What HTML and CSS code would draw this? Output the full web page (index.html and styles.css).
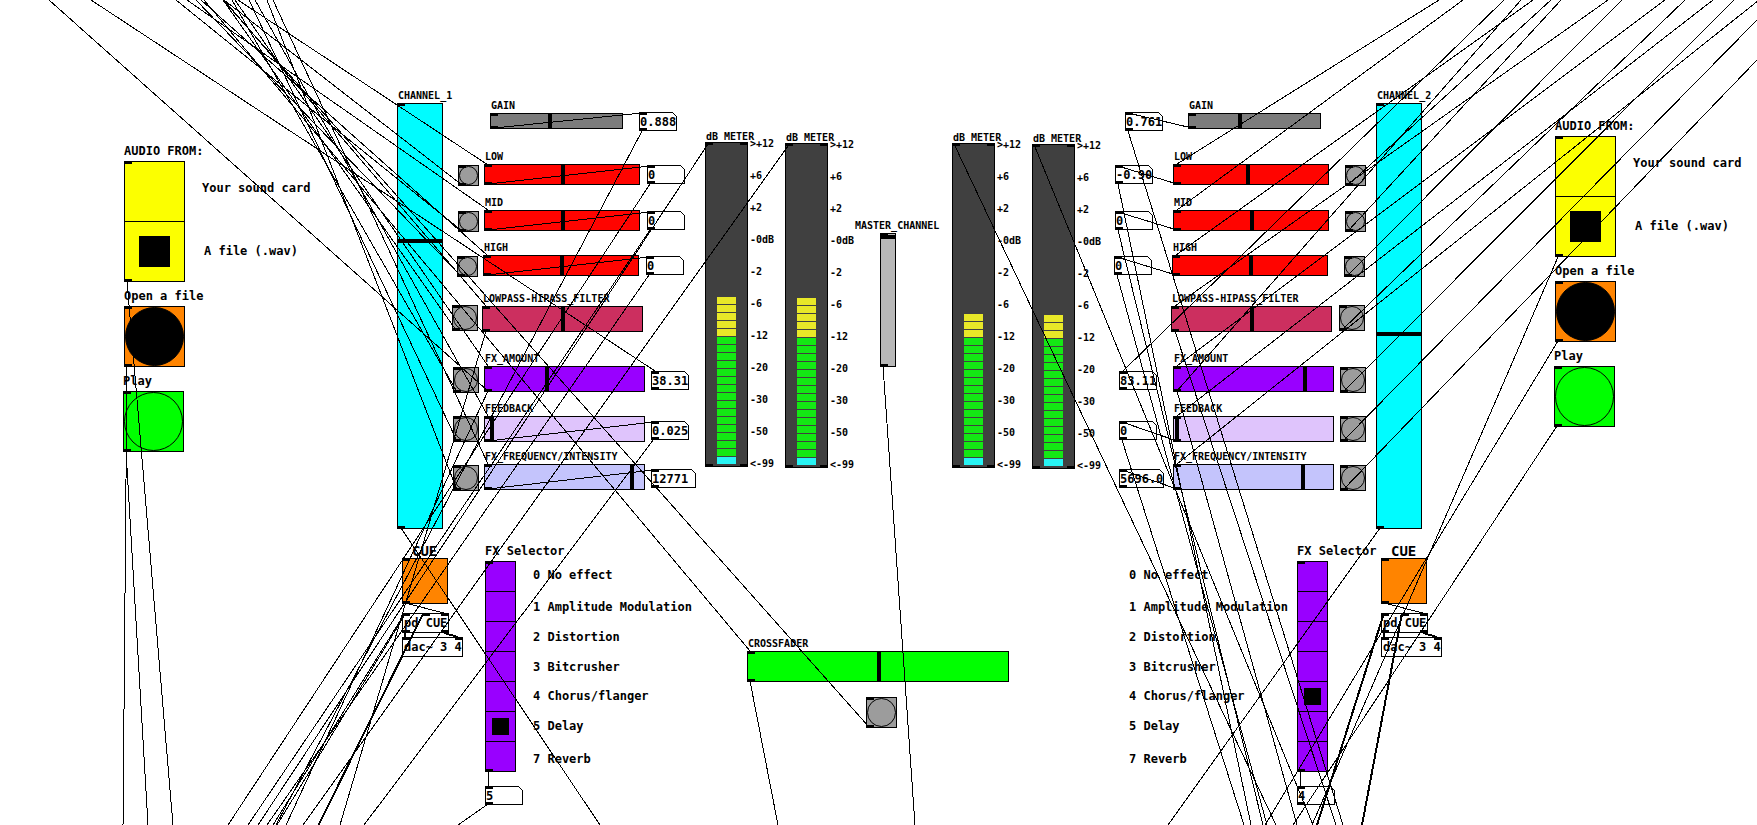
FILE: index.html
```html
<!DOCTYPE html>
<html lang="en">
<head>
<meta charset="utf-8">
<title>DJ mixer patch</title>
<link rel="stylesheet" href="styles.css">
</head>
<body>
<main class="patch">

  <!-- Source, deck 1 -->
  <span class="note" style="--x:124px;--y:143px">AUDIO FROM:</span>
  <div class="node radio audio" role="radiogroup" aria-label="Audio from, deck 1" style="--x:124px;--y:161px">
    <input type="radio" name="src1" id="src1a"><input type="radio" name="src1" id="src1b" checked>
  </div>
  <label class="note" for="src1a" style="--x:202px;--y:180px">Your sound card</label>
  <label class="note" for="src1b" style="--x:204px;--y:243px">A file (.wav)</label>
  <label class="note" for="open1" style="--x:124px;--y:288px">Open a file</label>
  <div class="node bang big orange lit" style="--x:124px;--y:306px"><button id="open1"></button></div>
  <label class="note" for="play1" style="--x:123px;--y:373px">Play</label>
  <div class="node bang big green" style="--x:123px;--y:391px"><button id="play1"></button></div>

  <!-- Channel 1 -->
  <div class="node fader channel" style="--x:397px;--y:103px"><label for="ch1">CHANNEL_1</label><input type="range" id="ch1" max="420" value="285"></div>
  <div class="node slider gain" style="--x:490px;--y:113px"><label for="gain1">GAIN</label><input type="range" id="gain1" max="127" value="57"></div>
  <div class="node slider eq" style="--x:484px;--y:164px"><label for="low1">LOW</label><input type="range" id="low1" max="150" value="76"></div>
  <div class="node slider eq" style="--x:484px;--y:210px"><label for="mid1">MID</label><input type="range" id="mid1" max="150" value="76"></div>
  <div class="node slider eq" style="--x:483px;--y:255px"><label for="high1">HIGH</label><input type="range" id="high1" max="150" value="76"></div>
  <div class="node slider fx filter" style="--x:482px;--y:306px"><label for="lp1">LOWPASS-HIPASS_FILTER</label><input type="range" id="lp1" max="155" value="78"></div>
  <div class="node slider fx amount" style="--x:484px;--y:366px"><label for="amt1">FX_AMOUNT</label><input type="range" id="amt1" max="155" value="60"></div>
  <div class="node slider fx feedback" style="--x:484px;--y:416px"><label for="fb1">FEEDBACK</label><input type="range" id="fb1" max="155" value="5"></div>
  <div class="node slider fx freq" style="--x:484px;--y:464px"><label for="frq1">FX_FREQUENCY/INTENSITY</label><input type="range" id="frq1" max="155" value="145"></div>

  <div class="node bang small" style="--x:458px;--y:165px"><button aria-label="Reset low 1"></button></div>
  <div class="node bang small" style="--x:458px;--y:211px"><button aria-label="Reset mid 1"></button></div>
  <div class="node bang small" style="--x:457px;--y:256px"><button aria-label="Reset high 1"></button></div>
  <div class="node bang medium" style="--x:452px;--y:305px"><button aria-label="Reset filter 1"></button></div>
  <div class="node bang medium" style="--x:453px;--y:367px"><button aria-label="Reset amount 1"></button></div>
  <div class="node bang medium" style="--x:453px;--y:416px"><button aria-label="Reset feedback 1"></button></div>
  <div class="node bang medium" style="--x:453px;--y:465px"><button aria-label="Reset frequency 1"></button></div>

  <div class="node number" style="--x:639px;--y:112px"><input aria-label="Gain 1" value="0.888"></div>
  <div class="node number" style="--x:647px;--y:165px"><input aria-label="Low 1" value="0"></div>
  <div class="node number" style="--x:647px;--y:211px"><input aria-label="Mid 1" value="0"></div>
  <div class="node number" style="--x:646px;--y:256px"><input aria-label="High 1" value="0"></div>
  <div class="node number" style="--x:651px;--y:371px"><input aria-label="Amount 1" value="38.31"></div>
  <div class="node number" style="--x:651px;--y:421px"><input aria-label="Feedback 1" value="0.025"></div>
  <div class="node number wide" style="--x:651px;--y:469px"><input aria-label="Frequency 1" value="12771"></div>

  <!-- Meters -->
  <div class="node meter" style="--x:705px;--y:142px"><span class="tag">dB_METER</span><div class="bars loud"></div>
    <ul><li>&gt;+12</li><li>+6</li><li>+2</li><li>-0dB</li><li>-2</li><li>-6</li><li>-12</li><li>-20</li><li>-30</li><li>-50</li><li>&lt;-99</li></ul></div>
  <div class="node meter" style="--x:785px;--y:143px"><span class="tag">dB_METER</span><div class="bars loud"></div>
    <ul><li>&gt;+12</li><li>+6</li><li>+2</li><li>-0dB</li><li>-2</li><li>-6</li><li>-12</li><li>-20</li><li>-30</li><li>-50</li><li>&lt;-99</li></ul></div>
  <div class="node meter" style="--x:952px;--y:143px"><span class="tag">dB_METER</span><div class="bars"></div>
    <ul><li>&gt;+12</li><li>+6</li><li>+2</li><li>-0dB</li><li>-2</li><li>-6</li><li>-12</li><li>-20</li><li>-30</li><li>-50</li><li>&lt;-99</li></ul></div>
  <div class="node meter" style="--x:1032px;--y:144px"><span class="tag">dB_METER</span><div class="bars"></div>
    <ul><li>&gt;+12</li><li>+6</li><li>+2</li><li>-0dB</li><li>-2</li><li>-6</li><li>-12</li><li>-20</li><li>-30</li><li>-50</li><li>&lt;-99</li></ul></div>

  <!-- Master and crossfader -->
  <div class="node fader master" style="--x:880px;--y:233px"><label for="master">MASTER_CHANNEL</label><input type="range" id="master" max="128" value="127"></div>
  <div class="node slider cross" style="--x:747px;--y:651px"><label for="cross">CROSSFADER</label><input type="range" id="cross" max="256" value="129"></div>
  <div class="node bang large" style="--x:866px;--y:697px"><button aria-label="Centre crossfader"></button></div>

  <!-- Channel 2 -->
  <div class="node fader channel" style="--x:1376px;--y:103px"><label for="ch2">CHANNEL_2</label><input type="range" id="ch2" max="420" value="192"></div>
  <div class="node slider gain" style="--x:1188px;--y:113px"><label for="gain2">GAIN</label><input type="range" id="gain2" max="127" value="49"></div>
  <div class="node slider eq" style="--x:1173px;--y:164px"><label for="low2">LOW</label><input type="range" id="low2" max="150" value="72"></div>
  <div class="node slider eq" style="--x:1173px;--y:210px"><label for="mid2">MID</label><input type="range" id="mid2" max="150" value="76"></div>
  <div class="node slider eq" style="--x:1172px;--y:255px"><label for="high2">HIGH</label><input type="range" id="high2" max="150" value="76"></div>
  <div class="node slider fx filter" style="--x:1171px;--y:306px"><label for="lp2">LOWPASS-HIPASS_FILTER</label><input type="range" id="lp2" max="155" value="78"></div>
  <div class="node slider fx amount" style="--x:1173px;--y:366px"><label for="amt2">FX_AMOUNT</label><input type="range" id="amt2" max="155" value="129"></div>
  <div class="node slider fx feedback" style="--x:1173px;--y:416px"><label for="fb2">FEEDBACK</label><input type="range" id="fb2" max="155" value="1"></div>
  <div class="node slider fx freq" style="--x:1173px;--y:464px"><label for="frq2">FX_FREQUENCY/INTENSITY</label><input type="range" id="frq2" max="155" value="127"></div>

  <div class="node bang small" style="--x:1345px;--y:165px"><button aria-label="Reset low 2"></button></div>
  <div class="node bang small" style="--x:1345px;--y:211px"><button aria-label="Reset mid 2"></button></div>
  <div class="node bang small" style="--x:1344px;--y:256px"><button aria-label="Reset high 2"></button></div>
  <div class="node bang medium" style="--x:1339px;--y:305px"><button aria-label="Reset filter 2"></button></div>
  <div class="node bang medium" style="--x:1340px;--y:367px"><button aria-label="Reset amount 2"></button></div>
  <div class="node bang medium" style="--x:1340px;--y:416px"><button aria-label="Reset feedback 2"></button></div>
  <div class="node bang medium" style="--x:1340px;--y:465px"><button aria-label="Reset frequency 2"></button></div>

  <div class="node number" style="--x:1125px;--y:112px"><input aria-label="Gain 2" value="0.761"></div>
  <div class="node number" style="--x:1115px;--y:165px"><input aria-label="Low 2" value="-0.90"></div>
  <div class="node number" style="--x:1115px;--y:211px"><input aria-label="Mid 2" value="0"></div>
  <div class="node number" style="--x:1114px;--y:256px"><input aria-label="High 2" value="0"></div>
  <div class="node number" style="--x:1119px;--y:371px"><input aria-label="Amount 2" value="83.11"></div>
  <div class="node number" style="--x:1119px;--y:421px"><input aria-label="Feedback 2" value="0"></div>
  <div class="node number wide" style="--x:1119px;--y:469px"><input aria-label="Frequency 2" value="5696.0"></div>

  <!-- Source, deck 2 -->
  <span class="note" style="--x:1555px;--y:118px">AUDIO FROM:</span>
  <div class="node radio audio" role="radiogroup" aria-label="Audio from, deck 2" style="--x:1555px;--y:136px">
    <input type="radio" name="src2" id="src2a"><input type="radio" name="src2" id="src2b" checked>
  </div>
  <label class="note" for="src2a" style="--x:1633px;--y:155px">Your sound card</label>
  <label class="note" for="src2b" style="--x:1635px;--y:218px">A file (.wav)</label>
  <label class="note" for="open2" style="--x:1555px;--y:263px">Open a file</label>
  <div class="node bang big orange lit" style="--x:1555px;--y:281px"><button id="open2"></button></div>
  <label class="note" for="play2" style="--x:1554px;--y:348px">Play</label>
  <div class="node bang big green" style="--x:1554px;--y:366px"><button id="play2"></button></div>

  <!-- Cue outputs -->
  <label class="note cue" for="cue1" style="--x:412px;--y:542px">CUE</label>
  <div class="node toggle" style="--x:402px;--y:558px"><input type="checkbox" id="cue1"></div>
  <div class="node object pd" style="--x:402px;--y:613px">pd CUE</div>
  <div class="node object dac" style="--x:402px;--y:637px">dac~ 3 4</div>
  <label class="note cue" for="cue2" style="--x:1391px;--y:542px">CUE</label>
  <div class="node toggle" style="--x:1381px;--y:558px"><input type="checkbox" id="cue2"></div>
  <div class="node object pd" style="--x:1381px;--y:613px">pd CUE</div>
  <div class="node object dac" style="--x:1381px;--y:637px">dac~ 3 4</div>

  <!-- Effect selectors -->
  <span class="note" style="--x:485px;--y:543px">FX Selector</span>
  <div class="node radio effect" role="radiogroup" aria-label="FX Selector 1" style="--x:485px;--y:561px">
    <input type="radio" name="fx1" id="fx1-0"><input type="radio" name="fx1" id="fx1-1"><input type="radio" name="fx1" id="fx1-2"><input type="radio" name="fx1" id="fx1-3"><input type="radio" name="fx1" id="fx1-4"><input type="radio" name="fx1" id="fx1-5" checked><input type="radio" name="fx1" id="fx1-7">
  </div>
  <label class="note" for="fx1-0" style="--x:533px;--y:567px">0 No effect</label>
  <label class="note" for="fx1-1" style="--x:533px;--y:599px">1 Amplitude Modulation</label>
  <label class="note" for="fx1-2" style="--x:533px;--y:629px">2 Distortion</label>
  <label class="note" for="fx1-3" style="--x:533px;--y:659px">3 Bitcrusher</label>
  <label class="note" for="fx1-4" style="--x:533px;--y:688px">4 Chorus/flanger</label>
  <label class="note" for="fx1-5" style="--x:533px;--y:718px">5 Delay</label>
  <label class="note" for="fx1-7" style="--x:533px;--y:751px">7 Reverb</label>
  <div class="node number" style="--x:485px;--y:786px"><input aria-label="Effect 1" value="5"></div>

  <span class="note" style="--x:1297px;--y:543px">FX Selector</span>
  <div class="node radio effect" role="radiogroup" aria-label="FX Selector 2" style="--x:1297px;--y:561px">
    <input type="radio" name="fx2" id="fx2-0"><input type="radio" name="fx2" id="fx2-1"><input type="radio" name="fx2" id="fx2-2"><input type="radio" name="fx2" id="fx2-3"><input type="radio" name="fx2" id="fx2-4" checked><input type="radio" name="fx2" id="fx2-5"><input type="radio" name="fx2" id="fx2-7">
  </div>
  <label class="note" for="fx2-0" style="--x:1129px;--y:567px">0 No effect</label>
  <label class="note" for="fx2-1" style="--x:1129px;--y:599px">1 Amplitude Modulation</label>
  <label class="note" for="fx2-2" style="--x:1129px;--y:629px">2 Distortion</label>
  <label class="note" for="fx2-3" style="--x:1129px;--y:659px">3 Bitcrusher</label>
  <label class="note" for="fx2-4" style="--x:1129px;--y:688px">4 Chorus/flanger</label>
  <label class="note" for="fx2-5" style="--x:1129px;--y:718px">5 Delay</label>
  <label class="note" for="fx2-7" style="--x:1129px;--y:751px">7 Reverb</label>
  <div class="node number" style="--x:1297px;--y:786px"><input aria-label="Effect 2" value="4"></div>

  <!-- Patch cords -->
  <svg class="wires" aria-hidden="true">
    <!-- presets into channel 1 -->
    <path d="M238 0L488 165M224 0L462 185M187 0L488 210M176 0L462 231M201 0L487 255M196 0L461 276M91 0L655 371M49 0L488 391M204 0L750 651M223 0L869 727M224 0L486 306M223 0L456 330M235 0L488 366M232 0L457 392M255 0L488 416M249 0L457 441M273 0L488 464M267 0L457 490"/>
    <!-- sliders to number boxes, channel 1 -->
    <path d="M494 128L642 113M488 184L650 166M488 230L650 212M487 275L649 257M488 441L654 422M488 489L654 470"/>
    <!-- channel 1 to the engine -->
    <path d="M642 131L276 825M650 184L228 825M650 230L248 825M708 144L258 825M649 275L267 825M788 146L303 825M654 439L364 825M486 331L340 825M488 391L286 825M405 613L273 825M406 613L277 825M401 528L600 825M488 771V786M488 804L458 825"/>
    <!-- deck 1 -->
    <path d="M127 281L173 825M127 366L123 825M126 451L148 825"/>
    <!-- master and crossfader -->
    <path d="M883 366L915 825M750 681L778 825"/>
    <!-- presets into channel 2 -->
    <path d="M1439 0L1177 164M1463 0L1177 210M1533 0L1176 255M1504 0L1123 371M1608 0L1175 306M1521 0L1177 391M1665 0L1177 366M1551 0L1348 185M1561 0L1348 231M1622 0L1347 276M1713 0L1177 416M1759 0L1177 464M1685 0L1342 330M1734 0L1343 392M1757 20L1343 441M1757 60L1343 490"/>
    <!-- sliders to number boxes, channel 2 -->
    <path d="M1192 128L1128 113M1177 184L1118 166M1177 230L1118 212M1176 275L1117 257M1177 441L1122 422M1177 489L1122 470"/>
    <!-- channel 2 to the engine -->
    <path d="M1128 131L1343 825M1118 184L1251 825M1118 230L1263 825M1117 275L1267 825M1122 440L1244 825M955 146L1276 825M1035 147L1313 825M1175 331L1336 825M1177 391L1297 825M1380 528L1168 825M1300 771V786"/>
    <!-- deck 2 -->
    <path d="M1558 257L1312 825M1558 341L1265 825M1557 426L1293 825"/>
    <!-- cue -->
    <path d="M405 603L444 613M1384 603L1423 613"/>
    <path class="signal" d="M405 633V637M444 633L458 637M1384 613L1317 825M1402 613L1362 825M1384 633V637M1423 633L1437 637"/>
    <path d="M423 613L318 825M424 613L319 825"/>
  </svg>
</main>
</body>
</html>
```
FILE: styles.css
```css
* {
  box-sizing: border-box;
}

body {
  margin: 0;
  background: #fff;
  color: #000;
  font: bold 12px/16px "DejaVu Sans Mono", monospace;
}

.patch {
  position: relative;
  min-height: 100vh;
  overflow: hidden;
}

/* Items on the patch canvas */
.node,
.note {
  position: absolute;
  left: var(--x);
  top: var(--y);
}

.note {
  white-space: nowrap;
}

.note.cue {
  font-size: 14px;
  line-height: 18px;
}

.node {
  width: var(--w);
  height: var(--h);
  border: 1px solid #000;
  background: var(--fill, #fff);
}

/* Inlet and outlet marks */
.node::before {
  content: "";
  position: absolute;
  z-index: 1;
  inset: -1px;
  background:
    linear-gradient(#000 0 0) 0 0 / 8px 3px no-repeat,
    linear-gradient(#000 0 0) 0 100% / 8px 3px no-repeat;
  pointer-events: none;
}

.node > label,
.tag {
  position: absolute;
  left: 0;
  bottom: 100%;
  font-size: 10px;
  line-height: 16px;
  white-space: nowrap;
}

.node input,
.node button {
  display: block;
  appearance: none;
  margin: 0;
  padding: 0;
  border: 0;
  border-radius: 0;
  outline: 0;
  background: none;
  width: 100%;
  height: 100%;
  color: inherit;
  font: inherit;
}

/* Sliders */
.slider input::-webkit-slider-thumb {
  appearance: none;
  width: 4px;
  height: calc(var(--h) - 2px);
  background: #000;
}

.fader input {
  writing-mode: vertical-lr;
  direction: rtl;
}

.fader input::-webkit-slider-thumb {
  appearance: none;
  width: calc(var(--w) - 2px);
  height: 4px;
  background: #000;
}

.gain { --w: 133px; --h: 16px; --fill: #7c7c7c; }
.eq { --w: 156px; --h: 21px; --fill: #ff0400; }
.fx { --w: 161px; --h: 26px; }
.filter { --fill: #cc2f5f; }
.amount { --fill: #9900ff; }
.feedback { --fill: #dfc4fc; }
.freq { --fill: #c4c4fc; }
.cross { --w: 262px; --h: 31px; --fill: #00ff00; }
.channel { --w: 46px; --h: 426px; --fill: #00fcff; }
.master { --w: 16px; --h: 134px; --fill: #b8b8b8; }

.master > label {
  left: -26px;
}

/* Bangs */
.bang {
  --w: var(--size);
  --h: var(--size);
  --fill: #9c9c9c;
}

.small { --size: 21px; }
.medium { --size: 26px; }
.large { --size: 31px; }
.big { --size: 61px; }
.orange { --fill: #ff8400; }
.green { --fill: #00ff00; }

.node.bang button {
  border: 1px solid #000;
  border-radius: 50%;
}

.node.lit button {
  background: #000;
}

.toggle {
  --w: 46px;
  --h: 46px;
  --fill: #ff8400;
}

/* Radio columns */
.radio {
  display: flex;
  flex-direction: column;
}

.node.radio input {
  flex: 0 0 auto;
  height: var(--cell);
  border-bottom: 1px solid #000;
}

.node.radio input:last-child {
  border-bottom: 0;
}

.node.radio input:checked {
  background: linear-gradient(#000 0 0) center / var(--dot) var(--dot) no-repeat;
}

.node.radio input:last-child {
  height: calc(var(--cell) - 1px);
}

.audio { --w: 61px; --h: 121px; --cell: 60px; --dot: 31px; --fill: #fcff00; }
.effect { --w: 31px; --h: 211px; --cell: 30px; --dot: 17px; --fill: #9900ff; }

/* Number boxes */
.number {
  --w: 38px;
  --h: 19px;
}

.number.wide {
  --w: 45px;
}

.number::after {
  content: "";
  position: absolute;
  top: -1px;
  right: -1px;
  width: 5px;
  height: 5px;
  background: linear-gradient(45deg, transparent 42%, #000 42% 58%, #fff 58%);
}

/* Objects */
.object {
  --h: 20px;
  padding-left: 1px;
  line-height: 18px;
  white-space: nowrap;
}

.pd { --w: 47px; }
.dac { --w: 61px; }

.pd::before {
  background:
    linear-gradient(#000 0 0) 0 0 / 8px 3px no-repeat,
    linear-gradient(#000 0 0) 50% 0 / 8px 3px no-repeat,
    linear-gradient(#000 0 0) 100% 0 / 8px 3px no-repeat,
    linear-gradient(#000 0 0) 0 100% / 8px 3px no-repeat,
    linear-gradient(#000 0 0) 100% 100% / 8px 3px no-repeat;
}

.dac::before {
  background:
    linear-gradient(#000 0 0) 0 0 / 8px 3px no-repeat,
    linear-gradient(#000 0 0) 100% 0 / 8px 3px no-repeat;
}

/* Level meters */
.meter {
  --w: 43px;
  --h: 325px;
  --fill: #404040;
}

.meter::before {
  background:
    linear-gradient(#000 0 0) 0 0 / 8px 3px no-repeat,
    linear-gradient(#000 0 0) 100% 0 / 8px 3px no-repeat,
    linear-gradient(#000 0 0) 0 100% / 8px 3px no-repeat,
    linear-gradient(#000 0 0) 100% 100% / 8px 3px no-repeat;
}

.meter .tag {
  z-index: 2;
  line-height: 12px;
}

.bars {
  position: absolute;
  left: 11px;
  bottom: 2px;
  width: 19px;
  height: 151px;
  background:
    repeating-linear-gradient(to top, transparent 0 7px, #404040 7px 8px),
    linear-gradient(to top, #28f4f4 0 8px, #14e814 8px 128px, #e8e828 128px);
}

.bars.loud {
  height: 167px;
}

.meter ul {
  position: absolute;
  left: 100%;
  top: -15px;
  margin: 0;
  padding: 0 0 0 3px;
  list-style: none;
  font-size: 10px;
  line-height: 32px;
}

.wires {
  position: absolute;
  inset: 0;
  width: 100%;
  height: 100%;
  fill: none;
  stroke: #000;
  stroke-width: 1;
  shape-rendering: crispEdges;
  pointer-events: none;
}

.wires .signal {
  stroke-width: 2;
}
```
